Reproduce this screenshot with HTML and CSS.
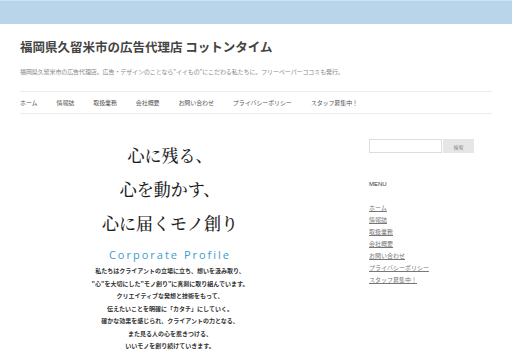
FILE: index.html
```html
<!DOCTYPE html>
<html lang="ja">
<head>
    <meta charset="UTF-8">
    <meta name="viewport" content="width=device-width, initial-scale=1.0">
    <title>福岡県久留米市の広告代理店 コットンタイム</title>
    <link rel="stylesheet" href="styles.css">
</head>
<body>

    <div class="top-band"></div>

    <div class="page">
        <header class="site-header">
            <h1 class="site-title">福岡県久留米市の広告代理店 コットンタイム</h1>
            <p class="site-description">福岡県久留米市の広告代理店。広告・デザインのことなら"イイもの"にこだわる私たちに。フリーペーパーココミも発行。</p>

            <nav class="main-nav">
                <a href="#">ホーム</a>
                <a href="#">情報誌</a>
                <a href="#">取扱業務</a>
                <a href="#">会社概要</a>
                <a href="#">お問い合わせ</a>
                <a href="#">プライバシーポリシー</a>
                <a href="#">スタッフ募集中！</a>
            </nav>
        </header>

        <div class="main">
            <div class="content">
                <div class="catch">
                    <p>心に残る、</p>
                    <p>心を動かす、</p>
                    <p>心に届くモノ創り</p>
                </div>

                <h2 class="profile-title">Corporate Profile</h2>
                <div class="profile-text">
                    <p>私たちはクライアントの立場に立ち、想いを汲み取り、</p>
                    <p>"心"を大切にした"モノ創り"に真剣に取り組んでいます。</p>
                    <p>クリエイティブな発想と技術をもって、</p>
                    <p>伝えたいことを明確に「カタチ」にしていく。</p>
                    <p>確かな効果を感じられ、クライアントの力となる、</p>
                    <p>また見る人の心を惹きつける、</p>
                    <p>いいモノを創り続けていきます。</p>
                </div>
            </div>

            <aside class="sidebar">
                <form class="search" onsubmit="return false">
                    <input type="text" class="search-field">
                    <button class="search-btn">検索</button>
                </form>

                <h3 class="widget-title">MENU</h3>
                <ul class="side-menu">
                    <li><a href="#">ホーム</a></li>
                    <li><a href="#">情報誌</a></li>
                    <li><a href="#">取扱業務</a></li>
                    <li><a href="#">会社概要</a></li>
                    <li><a href="#">お問い合わせ</a></li>
                    <li><a href="#">プライバシーポリシー</a></li>
                    <li><a href="#">スタッフ募集中！</a></li>
                </ul>
            </aside>
        </div>
    </div>

</body>
</html>
```

FILE: styles.css
```css
body {
    margin: 0;
    background: #fff;
    font-family: "Noto Sans CJK JP", "Liberation Sans", sans-serif;
    color: #444;
}
p, h1, h2, h3, ul {
    margin: 0;
    padding: 0;
}
.top-band {
    height: 23px;
    background: #b9d5ea;
    border-top: 1px solid #cfe2f1;
}
.page {
    padding: 0 20px;
}
.site-title {
    margin-top: 13px;
    font-size: 12.5px;
    line-height: 20px;
    font-weight: bold;
    color: #444;
}
.site-description {
    margin-top: 9px;
    font-size: 6px;
    line-height: 12px;
    letter-spacing: -0.1px;
    color: #888;
}
.main-nav {
    margin-top: 13px;
    border-top: 1px solid #ededed;
    border-bottom: 1px solid #ededed;
    display: flex;
    gap: 19px;
    line-height: 21px;
}
.main-nav a {
    font-size: 6px;
    letter-spacing: -0.1px;
    color: #555;
    text-decoration: none;
}
.main {
    display: flex;
    gap: 49px;
}
.content {
    width: 300px;
    text-align: center;
}
.catch {
    margin-top: 24px;
    font-family: "Noto Serif CJK JP", "Noto Sans CJK JP", serif;
    font-size: 17px;
    line-height: 34px;
    font-weight: 500;
    color: #1e1e1e;
}
.profile-title {
    margin-top: 8px;
    font-family: "Open Sans", "Liberation Sans", sans-serif;
    font-weight: normal;
    font-size: 11px;
    line-height: 14px;
    letter-spacing: 2px;
    color: #3a9ccd;
}
.profile-text {
    margin-top: 3px;
    font-size: 6px;
    line-height: 12.5px;
    font-weight: bold;
    color: #333;
}
.sidebar {
    width: 123px;
}
.search {
    margin-top: 25px;
    display: flex;
    gap: 1px;
}
.search-field {
    width: 73px;
    height: 14px;
    box-sizing: border-box;
    border: 1px solid #ddd;
    padding: 0;
    margin: 0;
}
.search-btn {
    width: 31px;
    height: 14px;
    border: none;
    background: #e6e6e6;
    color: #888;
    font-family: "Noto Sans CJK JP", sans-serif;
    font-size: 5px;
    padding: 0;
}
.widget-title {
    margin-top: 25px;
    font-family: "Liberation Sans", sans-serif;
    font-size: 6px;
    line-height: 12px;
    font-weight: normal;
    color: #333;
}
.side-menu {
    margin-top: 12px;
    list-style: none;
}
.side-menu li {
    font-size: 6px;
    line-height: 12px;
}
.side-menu a {
    color: #777;
}
```
